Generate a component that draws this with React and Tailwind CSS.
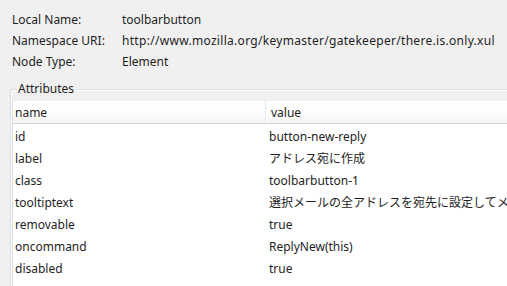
const INFO = [
  ['Local Name:', 'toolbarbutton'],
  ['Namespace URI:', 'http://www.mozilla.org/keymaster/gatekeeper/there.is.only.xul'],
  ['Node Type:', 'Element'],
]

const ATTRS = [
  ['id', 'button-new-reply'],
  ['label', 'アドレス宛に作成'],
  ['class', 'toolbarbutton-1'],
  ['tooltiptext', '選択メールの全アドレスを宛先に設定してメールを作成します'],
  ['removable', 'true'],
  ['oncommand', 'ReplyNew(this)'],
  ['disabled', 'true'],
]

export default function App() {
  return (
    <div
      className="w-[507px] h-[286px] overflow-hidden bg-[#f0f0f0] text-[12px] leading-[16px] text-[#1e1e1e]"
      style={{ fontFamily: '"Noto Sans", "Noto Sans CJK JP", sans-serif' }}
    >
      <div className="pl-[12px] pt-[9px] flex flex-col">
        {INFO.map(([k, v]) => (
          <div key={k} className="flex h-[21px] items-center whitespace-nowrap">
            <span className="w-[110px] shrink-0">{k}</span>
            <span className={v.startsWith('http') ? 'tracking-[0.3px]' : ''}>{v}</span>
          </div>
        ))}
      </div>

      <div className="relative mt-[17px] ml-[10px] h-[300px] border-l border-t border-[#d5dfe5] rounded-tl-[3px] shadow-[inset_1px_1px_0_#ffffff]">
        <span className="absolute left-[5px] top-[-10px] px-[2px] bg-[#f0f0f0] leading-[18px]">Attributes</span>
        <div className="mt-[11px] ml-[1px] h-[300px] bg-white border-l border-[#dadada]">
          <div className="flex h-[23px] bg-[linear-gradient(#ffffff_0%,#ffffff_40%,#f3f4f6_100%)] border-b border-[#d5d5d5]">
            <div className="w-[253px] shrink-0 pl-[2px] pt-[1px] flex items-center border-r border-[#e3e5e8] shadow-[1px_0_0_#ffffff]">name</div>
            <div className="pl-[5px] pt-[1px] flex items-center">value</div>
          </div>
          {ATTRS.map(([k, v]) => (
            <div key={k} className="flex h-[22px] pt-[4px] items-center whitespace-nowrap">
              <span className="w-[254px] shrink-0 pl-[2px]">{k}</span>
              <span className="pl-[2px]">{v}</span>
            </div>
          ))}
        </div>
      </div>
    </div>
  )
}
